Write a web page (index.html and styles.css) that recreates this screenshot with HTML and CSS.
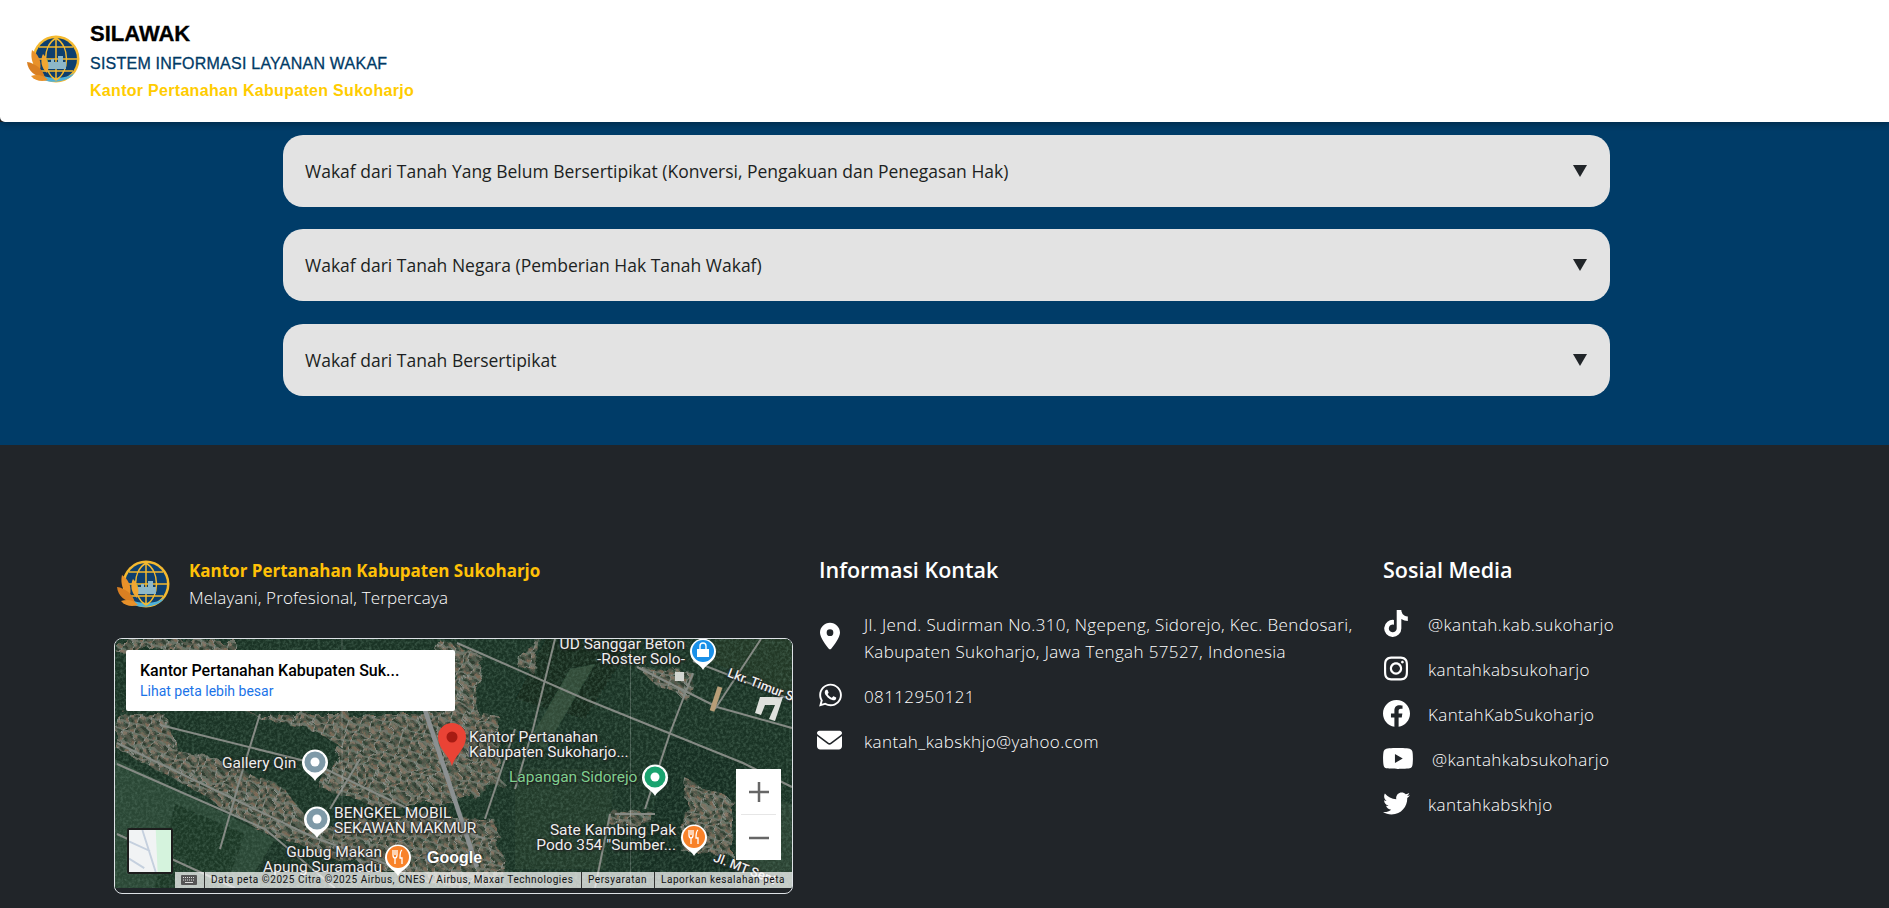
FILE: index.html
```html
<!DOCTYPE html>
<html>
	<head>
		<meta charset="utf-8" />
		<meta name="viewport" content="width=device-width,initial-scale=1" />
		<title>SILAWAK</title>
		<link rel="stylesheet" href="styles.css">
	</head>
	<body>
	<svg class="defs" width="0" height="0">
		<symbol id="logo" viewBox="0 0 58 50">
			<circle cx="32" cy="26" r="23.500" fill="#f4b92f"/>
			<circle cx="32" cy="26" r="21" fill="#0d3f6e"/>
			<path d="M13 40c7 6 31 7 38-1l-3 4c-8 7-27 8-33 1z" fill="#4fb0d8"/>
			<path d="M32 5v42M11 26h42M15 14h34M15 38h34M32 5c-14 8-14 34 0 42M32 5c14 8 14 34 0 42" fill="none" stroke="#f4b92f" stroke-width="1.500"/>
			<path d="M23 36v-7h4v-3h3v3h4v-6h5v6h3v7z" fill="#8db8c9"/>
			<circle cx="22" cy="28" r="2" fill="#3fb56b"/>
			<path d="M16 37C9 33 6 26 8 17 14 21 18 28 16 37z" fill="#e8912a"/>
			<path d="M21 45C11 44 4 38 3 29 11 30 19 36 21 45z" fill="#d97f22"/>
			<path d="M23 40C17 35 16 27 19 21 24 26 26 33 23 40z" fill="#f0a733"/>
			<path d="M24 47C18 49 11 48 7 43 13 41 20 42 24 47z" fill="#e8912a"/>
		</symbol>
		<symbol id="pin" viewBox="0 0 28 34">
			<path d="M14 33c-2-4-5-5-9-9A13 13 0 1 1 23 24c-4 4-7 5-9 9z" fill="#fff"/>
			<circle cx="14" cy="14" r="10.500" fill="currentColor"/>
			<circle cx="14" cy="14" r="4.500" fill="#fff"/>
		</symbol>
		<symbol id="pin-makan" viewBox="0 0 28 34">
			<path d="M14 33c-2-4-5-5-9-9A13 13 0 1 1 23 24c-4 4-7 5-9 9z" fill="#fff"/>
			<circle cx="14" cy="14" r="11" fill="currentColor"/>
			<path d="M9 7v5c0 2 1 3 2 3v6M11 7v5M13 7v5c0 2-1 3-2 3M18 7c-2 1-2 5-2 8h2v6" fill="none" stroke="#fff" stroke-width="1.300"/>
		</symbol>
		<symbol id="pin-toko" viewBox="0 0 28 34">
			<path d="M14 33c-2-4-5-5-9-9A13 13 0 1 1 23 24c-4 4-7 5-9 9z" fill="#fff"/>
			<circle cx="14" cy="14" r="11" fill="currentColor"/>
			<path d="M8 12h12v8H8z" fill="#fff"/>
			<path d="M11 12V9a3 3 0 0 1 6 0v3" fill="none" stroke="#fff" stroke-width="1.400"/>
		</symbol>
		<pattern id="rumah" width="11" height="10" patternUnits="userSpaceOnUse" patternTransform="rotate(18)">
			<rect width="11" height="10" fill="#55564a"/>
			<rect x="1" y="1" width="4" height="3" fill="#7d6957"/>
			<rect x="6" y="1" width="4" height="3" fill="#2d3b2d"/>
			<rect x="1" y="6" width="4" height="3" fill="#303e30"/>
			<rect x="6" y="6" width="4" height="3" fill="#857565"/>
			<path d="M0 5h11M5.500 0v10" stroke="#8f928c" stroke-width="1"/>
		</pattern>
		<filter id="lembut"><feGaussianBlur stdDeviation="0.500"/></filter>
		<filter id="tepi" x="-5%" y="-5%" width="110%" height="110%">
			<feTurbulence type="fractalNoise" baseFrequency="0.06" numOctaves="3" seed="4" result="acak"/>
			<feDisplacementMap in="SourceGraphic" in2="acak" scale="16"/>
			<feGaussianBlur stdDeviation="0.500"/>
		</filter>
		<filter id="bintik">
			<feTurbulence type="fractalNoise" baseFrequency="0.35" numOctaves="3" seed="9"/>
			<feColorMatrix values="0 0 0 0 0.08  0 0 0 0 0.16  0 0 0 0 0.11  1.300 0 0 0 -0.500"/>
		</filter>
	</svg>

	<header class="topbar">
		<svg class="topbar-logo"><use href="#logo"/></svg>
		<div class="topbar-text">
			<p class="app-name">SILAWAK</p>
			<p class="app-full">SISTEM INFORMASI LAYANAN WAKAF</p>
			<p class="app-office">Kantor Pertanahan Kabupaten Sukoharjo</p>
		</div>
	</header>

	<section class="layanan">
		<div class="acc-item">
			<span>Wakaf dari Tanah Yang Belum Bersertipikat (Konversi, Pengakuan dan Penegasan Hak)</span>
			<i class="acc-arrow"></i>
		</div>
		<div class="acc-item">
			<span>Wakaf dari Tanah Negara (Pemberian Hak Tanah Wakaf)</span>
			<i class="acc-arrow"></i>
		</div>
		<div class="acc-item">
			<span>Wakaf dari Tanah Bersertipikat</span>
			<i class="acc-arrow"></i>
		</div>
	</section>

	<footer class="footer">
		<div class="col-kantor">
			<div class="brand">
				<svg class="brand-logo"><use href="#logo"/></svg>
				<div>
					<p class="brand-name">Kantor Pertanahan Kabupaten Sukoharjo</p>
					<p class="brand-tag">Melayani, Profesional, Terpercaya</p>
				</div>
			</div>
			<div class="map-frame">
				<div class="map">
					<svg class="map-photo" viewBox="0 0 677 249" preserveAspectRatio="none">
						<rect width="677" height="249" fill="#1a3325"/>
						<g filter="url(#lembut)">
							<path d="M0 120L160 200 130 249H0z" fill="#2c4735"/>
							<path d="M60 165L130 195 110 249H40z" fill="#1c3727"/>
							<path d="M430 0L520 0 470 80 400 60z" fill="#152b1f"/>
							<path d="M455 30L480 25 430 110 415 100z" fill="#304c37"/>
							<path d="M555 95L640 130 620 249H520z" fill="#152e21"/>
							<path d="M400 130L500 130 490 230 400 230z" fill="#213a29"/>
							<path d="M600 0L677 0 677 60 590 20z" fill="#203727"/>
							<path d="M620 150L677 165V249H620z" fill="#294231"/>
						</g>
						<g fill="url(#rumah)" filter="url(#tepi)">
							<path d="M132 75L200 92 226 108 205 150 262 168 336 162 386 145 382 75 340 70 300 75z"/>
							<path d="M2 75L50 75 60 110 100 120 170 150 200 190 160 200 60 140 2 110z"/>
							<path d="M140 190L200 190 280 175 380 180 390 240 340 249 280 232 220 220z"/>
							<path d="M572 141L618 161 618 218 565 211z"/>
							<path d="M492 171L538 174 535 184 495 187z"/>
							<path d="M325 1L368 18 358 84 325 81z"/>
							<path d="M405 14L428 1 418 34 402 27z"/>
							<path d="M522 28L578 34 570 60 540 45z"/>
							<path d="M0 0H120V12H0z"/>
						</g>
						<rect width="677" height="249" filter="url(#bintik)"/>
						<g filter="url(#lembut)">
							<g fill="none" stroke="#858a84" stroke-width="2">
								<path d="M342 4L472 61 628 124 677 148"/>
								<path d="M522 28L602 68 677 89"/>
								<path d="M578 22L677 61"/>
								<path d="M646 0L600 70M578 34L555 94 530 170"/>
								<path d="M2 104L198 198 290 232"/>
								<path d="M2 125L150 190 220 249"/>
								<path d="M45 86L198 124 302 174 370 200"/>
								<path d="M145 75L125 140 105 210"/>
								<path d="M245 120L215 170"/>
								<path d="M400 90L370 180"/>
								<path d="M440 0L418 90 400 150"/>
								<path d="M500 175H540M495 175L480 249"/>
								<path d="M2 195L120 249"/>
							</g>
							<path d="M310 71L362 228" fill="none" stroke="#8b9091" stroke-width="4.500"/>
							<path d="M605 48L597 72" stroke="#b89e78" stroke-width="5"/>
							<path d="M645 58H668L660 82 654 80 660 66 650 66 646 76 640 74z" fill="#dfe1dd"/>
							<rect x="560" y="33" width="9" height="9" fill="#d4d6d2"/>
						</g>
						<path d="M227 0V249M515.500 0V249" stroke="#fff" stroke-opacity="0.200"/>
					</svg>

					<span class="label" style="left:107px;top:117px">Gallery Qin</span>
					<span class="label" style="left:219px;top:167px">BENGKEL MOBIL<br>SEKAWAN MAKMUR</span>
					<span class="label label-end" style="right:410px;top:206px">Gubug Makan<br>Apung Suramadu</span>
					<span class="label" style="left:354px;top:91px">Kantor Pertanahan<br>Kabupaten Sukoharjo...</span>
					<span class="label label-green" style="left:394px;top:131px">Lapangan Sidorejo</span>
					<span class="label label-end" style="right:116px;top:184px">Sate Kambing Pak<br>Podo 354 "Sumber...</span>
					<span class="label label-end" style="right:107px;top:-2px">UD Sanggar Beton<br>-Roster Solo-</span>
					<span class="label label-road" style="left:611px;top:38px">Lkr. Timur S</span>
					<span class="label label-road" style="left:597px;top:222px">Jl. MT Sept</span>

					<svg class="pin pin-grey" style="left:186px;top:109px"><use href="#pin"/></svg>
					<svg class="pin pin-grey" style="left:188px;top:166px"><use href="#pin"/></svg>
					<svg class="pin pin-orange" style="left:269px;top:204px"><use href="#pin-makan"/></svg>
					<svg class="pin pin-green" style="left:526px;top:124px"><use href="#pin"/></svg>
					<svg class="pin pin-orange" style="left:565px;top:184px"><use href="#pin-makan"/></svg>
					<svg class="pin pin-blue" style="left:574px;top:-2px"><use href="#pin-toko"/></svg>
					<svg class="pin-red" viewBox="0 0 30 44">
						<path d="M15 44C12 33 1 27 1 15a14 14 0 0 1 28 0c0 12-11 18-14 29z" fill="#ea4335"/>
						<circle cx="15" cy="15" r="5.500" fill="#a61b13"/>
					</svg>

					<div class="map-card">
						<p class="map-card-title">Kantor Pertanahan Kabupaten Suk...</p>
						<p class="map-card-link">Lihat peta lebih besar</p>
					</div>
					<div class="map-thumb">
						<svg viewBox="0 0 44 44" width="42" height="42">
							<rect width="44" height="44" fill="#f1f3f4"/>
							<path d="M28 0H44V44H30z" fill="#d5f3dd"/>
							<path d="M0 12L22 22M14 0L28 44M0 30L16 40" stroke="#c5d0de" stroke-width="2" fill="none"/>
						</svg>
					</div>
					<div class="map-zoom">
						<svg viewBox="0 0 45 45" class="zoom-btn"><path d="M13 23H33M23 13V33" stroke="#666" stroke-width="2.500"/></svg>
						<i class="zoom-line"></i>
						<svg viewBox="0 0 45 45" class="zoom-btn"><path d="M13 23H33" stroke="#666" stroke-width="2.500"/></svg>
					</div>
					<span class="map-google">Google</span>
					<div class="map-attr">
						<span class="attr-key">
							<svg viewBox="0 0 16 10" width="16" height="10"><path d="M1 0h14a1 1 0 0 1 1 1v8a1 1 0 0 1-1 1H1a1 1 0 0 1-1-1V1a1 1 0 0 1 1-1z" fill="#555"/><path d="M2 2.500h12M2 5h12" stroke="#ddd" stroke-dasharray="1 1"/><path d="M4 7.500h8" stroke="#ddd"/></svg>
						</span>
						<span class="attr-data">Data peta ©2025 Citra ©2025 Airbus, CNES / Airbus, Maxar Technologies</span>
						<span class="attr-syarat">Persyaratan</span>
						<span class="attr-lapor">Laporkan kesalahan peta</span>
					</div>
				</div>
			</div>
		</div>

		<div class="col-kontak">
			<h3>Informasi Kontak</h3>
			<ul class="rows">
				<li>
					<svg class="ic ic-pin" viewBox="0 0 384 512"><path d="M215.7 499.2C267 435 384 279.4 384 192C384 86 298 0 192 0S0 86 0 192c0 87.4 117 243 168.300 307.2c12.300 15.300 35.100 15.300 47.400 0zM192 128a64 64 0 1 1 0 128 64 64 0 1 1 0-128z"/></svg>
					<span>Jl. Jend. Sudirman No.310, Ngepeng, Sidorejo, Kec. Bendosari,<br>Kabupaten Sukoharjo, Jawa Tengah 57527, Indonesia</span>
				</li>
				<li>
					<svg class="ic ic-wa" viewBox="0 0 448 512"><path d="M380.900 97.100C339 55.100 283.200 32 223.900 32c-122.400 0-222 99.600-222 222 0 39.100 10.200 77.300 29.600 111L0 480l117.700-30.900c32.400 17.700 68.900 27 106.100 27h.1c122.300 0 224.100-99.600 224.100-222 0-59.300-25.200-115-67.100-157zm-157 341.600c-33.200 0-65.700-8.900-94-25.700l-6.700-4-69.800 18.300L72 359.200l-4.400-7c-18.500-29.400-28.200-63.300-28.200-98.200 0-101.700 82.800-184.500 184.600-184.500 49.300 0 95.600 19.200 130.400 54.100 34.800 34.900 56.200 81.200 56.100 130.500 0 101.800-84.900 184.600-186.600 184.600zm101.200-138.200c-5.500-2.800-32.800-16.200-37.900-18-5.100-1.900-8.800-2.800-12.500 2.800-3.700 5.600-14.300 18-17.600 21.800-3.200 3.700-6.500 4.200-12 1.400-32.600-16.300-54-29.100-75.500-66-5.700-9.800 5.700-9.100 16.300-30.300 1.800-3.700.9-6.900-.5-9.700-1.400-2.800-12.500-30.100-17.100-41.200-4.500-10.800-9.100-9.300-12.500-9.500-3.200-.2-6.900-.2-10.600-.2-3.700 0-9.700 1.400-14.800 6.900-5.100 5.600-19.400 19-19.400 46.300 0 27.300 19.900 53.700 22.600 57.400 2.800 3.700 39.100 59.700 94.800 83.800 35.200 15.200 49 16.500 66.600 13.900 10.700-1.600 32.800-13.400 37.400-26.400 4.600-13 4.600-24.100 3.200-26.400-1.300-2.500-5-3.900-10.500-6.600z"/></svg>
					<span>08112950121</span>
				</li>
				<li>
					<svg class="ic ic-mail" viewBox="0 64 512 384"><path d="M48 64C21.500 64 0 85.500 0 112c0 15.100 7.100 29.300 19.200 38.400L236.800 313.600c11.400 8.500 27 8.500 38.400 0L492.800 150.400c12.100-9.100 19.200-23.300 19.200-38.400c0-26.500-21.500-48-48-48H48zM0 176V384c0 35.300 28.700 64 64 64H448c35.300 0 64-28.700 64-64V176L294.400 339.200c-22.800 17.100-54 17.100-76.800 0L0 176z"/></svg>
					<span>kantah_kabskhjo@yahoo.com</span>
				</li>
			</ul>
		</div>

		<div class="col-sosial">
			<h3>Sosial Media</h3>
			<ul class="rows rows-sosial">
				<li>
					<svg class="ic-s" viewBox="0 0 448 512"><path d="M448,209.910a210.060,210.060,0,0,1-122.770-39.250V349.380A162.550,162.550,0,1,1,185,188.310V278.200a74.620,74.620,0,1,0,52.230,71.180V0l88,0a121.180,121.180,0,0,0,1.860,22.170h0A122.180,122.180,0,0,0,381,102.390a121.430,121.430,0,0,0,67,20.140Z"/></svg>
					<span>@kantah.kab.sukoharjo</span>
				</li>
				<li>
					<svg class="ic-s" viewBox="0 32 448 448"><path d="M224.100 141c-63.600 0-114.900 51.300-114.900 114.900s51.300 114.900 114.900 114.900S339 319.500 339 255.900 287.700 141 224.100 141zm0 189.600c-41.100 0-74.700-33.500-74.700-74.700s33.500-74.700 74.700-74.700 74.700 33.500 74.700 74.700-33.600 74.700-74.700 74.700zm146.400-194.300c0 14.900-12 26.800-26.800 26.800-14.900 0-26.800-12-26.800-26.800s12-26.800 26.800-26.800 26.800 12 26.800 26.800zm76.100 27.200c-1.700-35.900-9.900-67.700-36.200-93.900-26.200-26.200-58-34.400-93.900-36.200-37-2.100-147.900-2.100-184.900 0-35.800 1.700-67.600 9.900-93.900 36.100s-34.400 58-36.200 93.900c-2.100 37-2.100 147.900 0 184.900 1.700 35.900 9.900 67.700 36.200 93.900s58 34.400 93.900 36.200c37 2.100 147.900 2.100 184.900 0 35.900-1.700 67.700-9.900 93.900-36.200 26.200-26.200 34.400-58 36.200-93.900 2.100-37 2.100-147.800 0-184.800zM398.800 388c-7.800 19.600-22.900 34.700-42.600 42.600-29.500 11.700-99.500 9-132.100 9s-102.700 2.600-132.100-9c-19.600-7.800-34.700-22.900-42.600-42.600-11.700-29.500-9-99.500-9-132.100s-2.600-102.700 9-132.100c7.800-19.600 22.900-34.700 42.600-42.600 29.500-11.700 99.500-9 132.100-9s102.700-2.600 132.100 9c19.600 7.800 34.700 22.900 42.600 42.600 11.700 29.500 9 99.500 9 132.100s2.700 102.700-9 132.100z"/></svg>
					<span>kantahkabsukoharjo</span>
				</li>
				<li>
					<svg class="ic-s ic-fb" viewBox="8 8 496 496"><path d="M504 256C504 119 393 8 256 8S8 119 8 256c0 123.780 90.690 226.380 209.250 245V327.690h-63V256h63v-54.640c0-62.150 37-96.480 93.670-96.480 27.140 0 55.520 4.840 55.520 4.840v61h-31.280c-30.800 0-40.410 19.120-40.410 38.730V256h68.780l-11 71.690h-57.780V501C413.310 482.380 504 379.780 504 256z"/></svg>
					<span>KantahKabSukoharjo</span>
				</li>
				<li>
					<svg class="ic-s ic-yt" viewBox="14 64 548 384"><path d="M549.655 124.083c-6.281-23.650-24.787-42.276-48.284-48.597C458.781 64 288 64 288 64S117.220 64 74.629 75.486c-23.497 6.322-42.003 24.947-48.284 48.597-11.412 42.867-11.412 132.305-11.412 132.305s0 89.438 11.412 132.305c6.281 23.650 24.787 41.500 48.284 47.821C117.220 448 288 448 288 448s170.780 0 213.371-11.486c23.497-6.321 42.003-24.171 48.284-47.821 11.412-42.867 11.412-132.305 11.412-132.305s0-89.438-11.412-132.305zm-317.510 213.508V175.185l142.739 81.205-142.739 81.201z"/></svg>
					<span class="yt-text">@kantahkabsukoharjo</span>
				</li>
				<li>
					<svg class="ic-s ic-fb" viewBox="0 48 512 416"><path d="M459.370 151.716c.325 4.548.325 9.097.325 13.645 0 138.720-105.583 298.558-298.558 298.558-59.452 0-114.680-17.219-161.137-47.106 8.447.974 16.568 1.299 25.340 1.299 49.055 0 94.213-16.568 130.274-44.832-46.132-.975-84.792-31.188-98.112-72.772 6.498.974 12.995 1.624 19.818 1.624 9.421 0 18.843-1.300 27.614-3.573-48.081-9.747-84.143-51.980-84.143-102.985v-1.299c13.969 7.797 30.214 12.670 47.431 13.319-28.264-18.843-46.781-51.005-46.781-87.391 0-19.492 5.197-37.360 14.294-52.954 51.655 63.675 129.300 105.258 216.365 109.807-1.624-7.797-2.599-15.918-2.599-24.040 0-57.828 46.782-104.934 104.934-104.934 30.213 0 57.502 12.670 76.670 33.137 23.715-4.548 46.456-13.320 66.599-25.340-7.798 24.366-24.366 44.833-46.132 57.827 21.117-2.273 41.584-8.122 60.426-16.243-14.292 20.791-32.161 39.308-52.628 54.253z"/></svg>
					<span>kantahkabskhjo</span>
				</li>
			</ul>
		</div>
	</footer>
	</body>
</html>
```

FILE: styles.css
```css
*{
	box-sizing: border-box;
}
body{
	margin: 0;
	font-family: "Open Sans", "Noto Sans", sans-serif;
	color: #fff;
	background-color: #212529;
}
p{
	margin: 0;
}
.defs{
	display: block;
	height: 0;
}

/* header */
.topbar{
	display: flex;
	align-items: flex-start;
	height: 122px;
	padding: 21px 0 0 24px;
	background-color: #fff;
	border-radius: 0 0 0 5px;
	box-shadow: 0 2px 6px rgba(0,0,0,.3);
	position: relative;
	font-family: "Liberation Sans", Arial, sans-serif;
}
.topbar-logo{
	width: 58px;
	height: 50px;
	margin-top: 12px;
	margin-right: 8px;
}
.app-name{
	font-size: 22px;
	font-weight: bold;
	line-height: 26px;
	color: #000;
	-webkit-text-stroke: .3px #000;
}
.app-full{
	font-size: 16px;
	line-height: 24px;
	margin-top: 5px;
	color: #003a66;
	letter-spacing: .23px;
	-webkit-text-stroke: .3px #003a66;
}
.app-office{
	font-size: 16px;
	font-weight: bold;
	line-height: 22px;
	margin-top: 4px;
	color: #ffcc00;
	letter-spacing: .3px;
}

/* accordion */
.layanan{
	height: 323px;
	padding: 13px 0 0 283px;
	background-color: #003c68;
}
.acc-item{
	display: flex;
	align-items: center;
	justify-content: space-between;
	width: 1327px;
	height: 72px;
	margin-bottom: 22px;
	padding: 0 23px 0 22px;
	border-radius: 20px;
	background-color: #e3e3e3;
	color: #1c1f22;
	font-size: 17.500px;
	font-weight: 500;
}
.acc-item:nth-child(2){
	margin-bottom: 23px;
}
.acc-arrow{
	width: 0;
	height: 0;
	border-left: 7px solid transparent;
	border-right: 7px solid transparent;
	border-top: 12px solid #212529;
}

/* footer */
.footer{
	display: grid;
	grid-template-columns: 679px 536px auto;
	column-gap: 27px;
	height: 463px;
	padding: 111px 0 0 114px;
}
.brand{
	display: flex;
	height: 82px;
	padding-top: 1px;
}
.brand-logo{
	width: 58px;
	height: 50px;
	margin-top: 1px;
	margin-right: 17px;
}
.brand-name{
	font-size: 17px;
	font-weight: 700;
	line-height: 27px;
	color: #ffc107;
}
.brand-tag{
	font-size: 17px;
	font-weight: 300;
	line-height: 27px;
	letter-spacing: .15px;
}
h3{
	margin: -1px 0 26px;
	font-size: 21.500px;
	font-weight: 600;
	line-height: 30px;
}
.col-kontak h3{
	margin-left: -1px;
}
.rows{
	margin: 0;
	padding: 0;
	list-style: none;
	font-size: 17px;
	font-weight: 300;
	line-height: 27px;
	letter-spacing: .38px;
}
.rows li{
	display: flex;
	align-items: center;
	margin-bottom: 18px;
	white-space: nowrap;
}
.rows svg{
	fill: #fff;
	flex: none;
}
.ic{
	margin-right: 24px;
}
.ic-pin{
	width: 20px;
	height: 28px;
	margin-top: -5px;
}
.ic-wa{
	width: 23px;
	height: 26px;
	margin-top: -3px;
	margin-left: -1px;
	margin-right: 22px;
}
.ic-mail{
	width: 25px;
	height: 20px;
	margin-top: -4px;
	margin-left: -3px;
	margin-right: 22px;
}
.ic-s{
	width: 24px;
	height: 27px;
	margin-top: -3px;
	margin-left: 1px;
	margin-right: 20px;
}
.ic-fb{
	width: 27px;
	margin-left: 0;
	margin-right: 18px;
}
.ic-yt{
	width: 30px;
	height: 21px;
	margin-left: 0;
	margin-right: 15px;
}
.yt-text{
	margin-left: 4px;
}

/* map */
.map-frame{
	width: 679px;
	height: 256px;
	border: 1px solid #dee2e6;
	border-radius: 8px;
	overflow: hidden;
}
.map{
	position: relative;
	height: 249px;
	overflow: hidden;
	font-family: Roboto, "Liberation Sans", sans-serif;
}
.map-photo{
	display: block;
	width: 100%;
	height: 100%;
}
.label{
	position: absolute;
	font-size: 15.500px;
	line-height: 15px;
	white-space: nowrap;
	color: #eee;
	text-shadow: 0 0 2px #222, 0 0 3px #222, 1px 1px 2px #222;
}
.label-end{
	text-align: right;
}
.label-green{
	color: #7fd08f;
}
.label-road{
	font-size: 13px;
	font-weight: 500;
	transform: rotate(21deg);
}
.pin{
	position: absolute;
	width: 28px;
	height: 34px;
}
.pin-grey{
	color: #7f9aa8;
}
.pin-orange{
	color: #f8822a;
}
.pin-green{
	color: #1aa36f;
}
.pin-blue{
	color: #1a90e8;
}
.pin-red{
	position: absolute;
	left: 322px;
	top: 83px;
	width: 30px;
	height: 44px;
}
.map-card{
	position: absolute;
	left: 11px;
	top: 11px;
	width: 329px;
	height: 61px;
	padding: 11px 14px;
	background-color: #fff;
	border-radius: 2px;
	color: #000;
}
.map-card-title{
	font-size: 16px;
	font-weight: 500;
	line-height: 20px;
}
.map-card-link{
	font-size: 14px;
	line-height: 20px;
	color: #1a73e8;
}
.map-thumb{
	position: absolute;
	left: 12px;
	top: 189px;
	width: 46px;
	height: 46px;
	border: 2px solid #1d1d1d;
	border-radius: 2px;
}
.map-thumb svg{
	display: block;
}
.map-zoom{
	position: absolute;
	left: 621px;
	top: 130px;
	width: 45px;
	height: 91px;
	background-color: #fff;
}
.zoom-btn{
	display: block;
	width: 45px;
	height: 45px;
}
.zoom-line{
	display: block;
	height: 1px;
	margin: 0 5px;
	background-color: #e6e6e6;
}
.map-google{
	position: absolute;
	left: 312px;
	top: 210px;
	font-family: "Liberation Sans", sans-serif;
	font-size: 16px;
	font-weight: bold;
	color: #fff;
	text-shadow: 0 0 2px #222;
}
.map-attr{
	position: absolute;
	left: 60px;
	right: 0;
	top: 233px;
	display: flex;
	height: 16px;
	background-color: rgba(255,255,255,.72);
	font-size: 10px;
	line-height: 16px;
	letter-spacing: .55px;
	color: #111;
	white-space: nowrap;
}
.map-attr span{
	display: flex;
	align-items: center;
	border-right: 1px solid #333;
	padding: 0 6px;
}
.attr-key{
	width: 30px;
}
.attr-data{
	width: 377px;
}
.attr-syarat{
	width: 73px;
}
.map-attr .attr-lapor{
	border-right: 0;
}
```
